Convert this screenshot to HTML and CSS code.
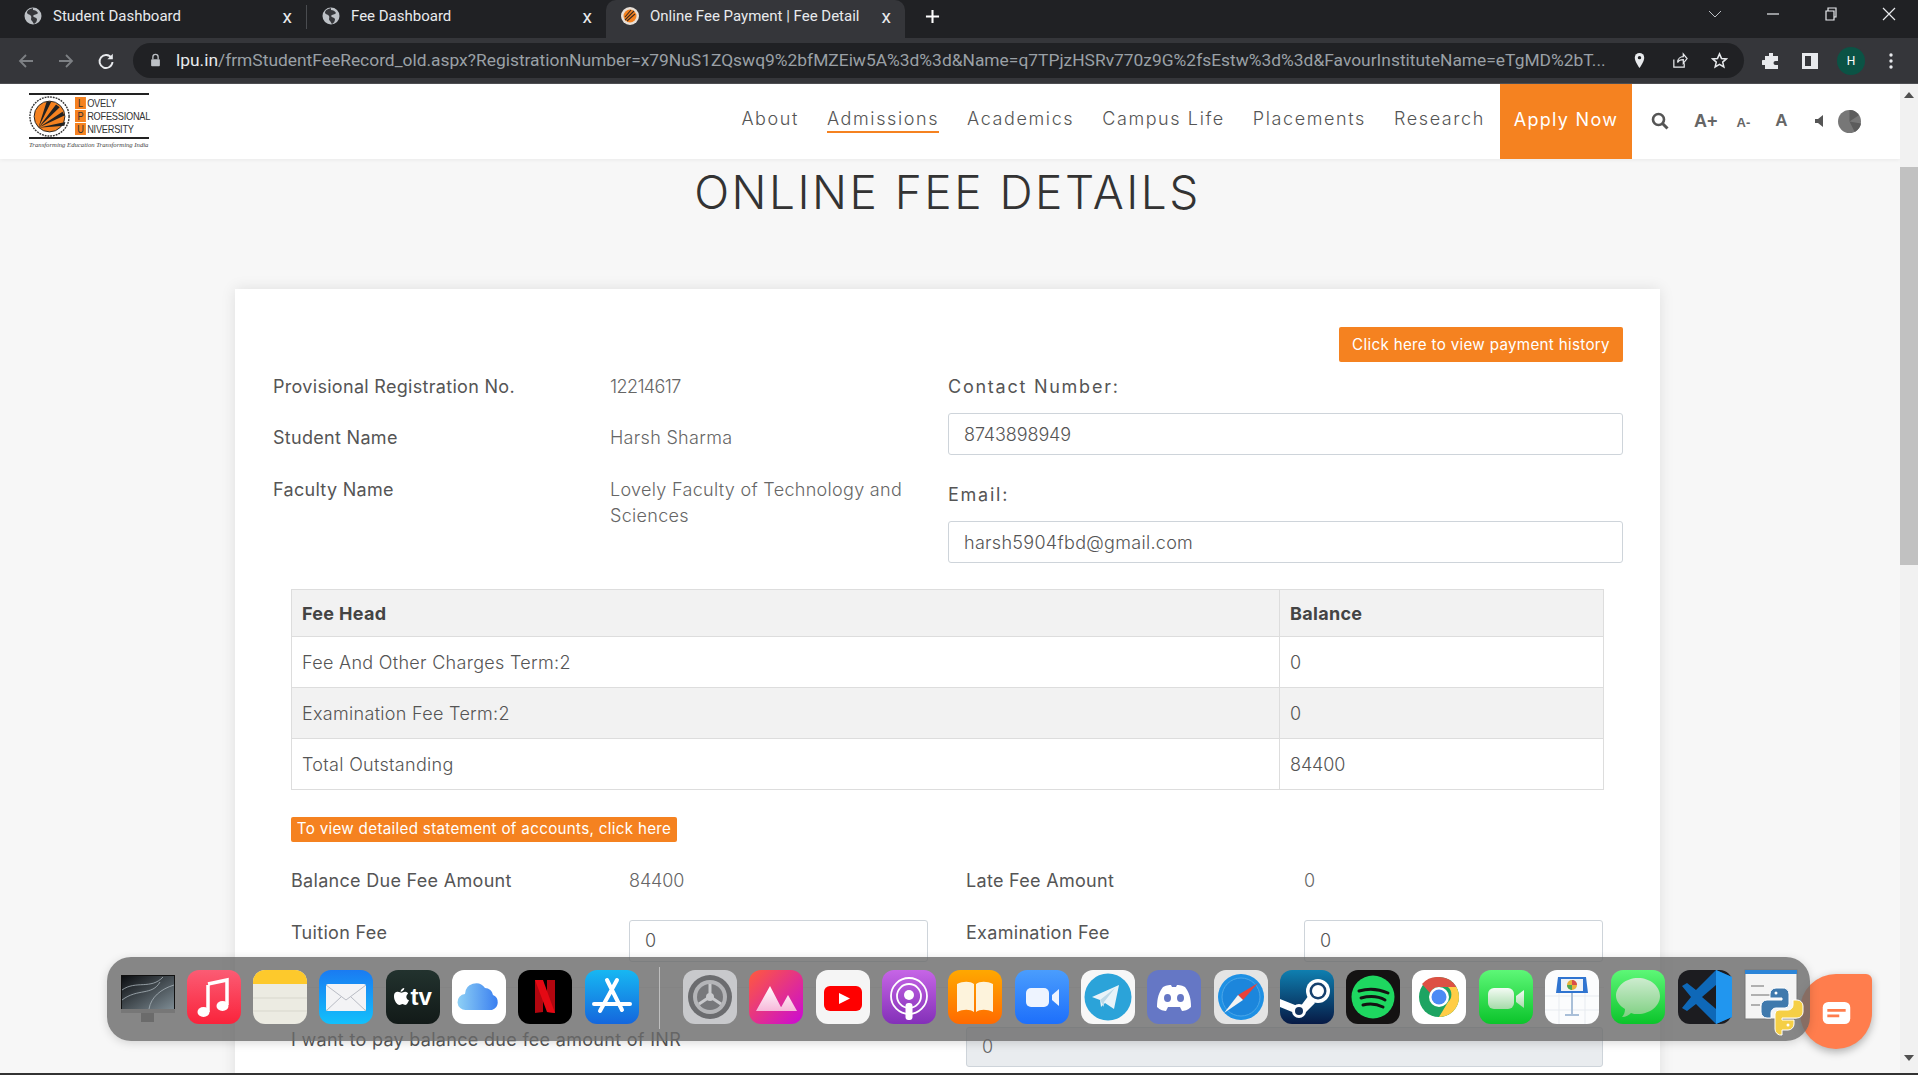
FILE: index.html
```html
<!doctype html>
<html>
<head>
  <meta charset="utf-8">
  <title>Online Fee Payment | Fee Detail</title>
  <link rel="stylesheet" href="styles.css">
</head>
<body>
  <div class="tabstrip">
    <div class="tab tab-first">
      <svg class="favicon" viewBox="0 0 18 18"><circle cx="9" cy="9" r="8.5" fill="#bdc1c6"/><path d="M9 1C6 2 3 3 3 6c1 2 3 1 4 3s-1 3 1 5c1 1 1 2 2 3 2-1 3-3 3-5-1-2-3-1-4-3 1-2 4-1 5-3-1-2-3-3-5-3z" fill="#35363a"/></svg>
      <span class="tab-title">Student Dashboard</span>
      <span class="tab-close">x</span>
    </div>
    <div class="tab tab-sep">
      <svg class="favicon" viewBox="0 0 18 18"><circle cx="9" cy="9" r="8.5" fill="#bdc1c6"/><path d="M9 1C6 2 3 3 3 6c1 2 3 1 4 3s-1 3 1 5c1 1 1 2 2 3 2-1 3-3 3-5-1-2-3-1-4-3 1-2 4-1 5-3-1-2-3-3-5-3z" fill="#35363a"/></svg>
      <span class="tab-title">Fee Dashboard</span>
      <span class="tab-close">x</span>
    </div>
    <div class="tab tab-active">
      <svg class="favicon" viewBox="0 0 18 18"><circle cx="9" cy="9" r="9" fill="#e8e0d8"/><circle cx="9" cy="9" r="6.5" fill="#f58220"/><path d="M4 13 13 4M6 14l8-7M4 10l6-7" stroke="#3a2a20" stroke-width="1.1"/></svg>
      <span class="tab-title">Online Fee Payment | Fee Detail</span>
      <span class="tab-close">x</span>
    </div>
    <svg class="tab-new" viewBox="0 0 16 16"><path d="M8 1v14M1 8h14" stroke="#fff" stroke-width="2.2"/></svg>
    <div class="window-btns">
      <svg viewBox="0 0 14 14"><path d="M1 4l6 6 6-6" fill="none" stroke="#bdc1c6"/></svg>
      <svg viewBox="0 0 14 14"><path d="M1 7h12" stroke="#e8eaed" stroke-width="1.2"/></svg>
      <svg viewBox="0 0 14 14"><path d="M2 4h8v9H2zM4 4V1h8v9h-2" fill="none" stroke="#e8eaed" stroke-width="1.2"/></svg>
      <svg viewBox="0 0 14 14"><path d="M1 1l12 12M13 1 1 13" stroke="#e8eaed" stroke-width="1.2"/></svg>
    </div>
  </div>

  <div class="toolbar">
    <svg class="nav-ico" viewBox="0 0 18 18"><path d="M16 9H3M9 3 3 9l6 6" fill="none" stroke="#7d8084" stroke-width="1.8"/></svg>
    <svg class="nav-ico" viewBox="0 0 18 18"><path d="M2 9h13M9 3l6 6-6 6" fill="none" stroke="#7d8084" stroke-width="1.8"/></svg>
    <svg class="nav-ico" viewBox="0 0 18 18"><path d="M14.5 6A6.5 6.5 0 1 0 15.5 10" fill="none" stroke="#e8eaed" stroke-width="1.9"/><path d="M15.8 1.8v5.4h-5.4z" fill="#e8eaed"/></svg>
    <div class="omnibox">
      <svg class="lock" viewBox="0 0 12 16"><path d="M3 7V4.5a3 3 0 0 1 6 0V7" fill="none" stroke="#bdc1c6" stroke-width="1.5"/><rect x="1" y="7" width="10" height="8" rx="1" fill="#bdc1c6"/></svg>
      <span class="url"><span class="url-host">lpu.in</span>/frmStudentFeeRecord_old.aspx?RegistrationNumber=x79NuS1ZQswq9%2bfMZEiw5A%3d%3d&amp;Name=q7TPjzHSRv770z9G%2fsEstw%3d%3d&amp;FavourInstituteName=eTgMD%2bT...</span>
      <svg class="omni-ico" viewBox="0 0 18 18"><path d="M9 1a5 5 0 0 0-5 5c0 4 5 11 5 11s5-7 5-11a5 5 0 0 0-5-5z" fill="#e8eaed"/><circle cx="9" cy="6" r="1.8" fill="#202124"/></svg>
      <svg class="omni-ico" viewBox="0 0 18 18"><path d="M3 8v8h11v-4M7 11c0-4 3-6 6-6V2l4 5-4 5V8c-3 0-5 1-6 3z" fill="none" stroke="#e8eaed" stroke-width="1.3"/></svg>
      <svg class="omni-ico" viewBox="0 0 18 18"><path d="M9 2l2.1 4.8 5.2.5-3.9 3.4 1.2 5.1L9 13.1l-4.6 2.7 1.2-5.1L1.7 7.3l5.2-.5z" fill="none" stroke="#e8eaed" stroke-width="1.6"/></svg>
    </div>
    <svg class="tool-ico" viewBox="0 0 18 18"><path d="M7 1h4v3h5v5h-2.5a2 2 0 1 0 0 4H16v4H3v-4H1.500a2.500 2.500 0 1 1 0-5H3V4h4z" fill="#e8eaed"/></svg>
    <svg class="tool-ico" viewBox="0 0 18 18"><path d="M1 1h16v16H1z" fill="#e8eaed"/><path d="M4 4h6v10H4z" fill="#35363a"/></svg>
    <span class="avatar">H</span>
    <svg class="tool-ico" viewBox="0 0 18 18"><circle cx="9" cy="3" r="1.7" fill="#e8eaed"/><circle cx="9" cy="9" r="1.7" fill="#e8eaed"/><circle cx="9" cy="15" r="1.7" fill="#e8eaed"/></svg>
  </div>

  <div class="viewport">
    <div class="page">
      <header class="site-head">
        <div class="logo">
          <div class="logo-main">
            <svg class="logo-seal" viewBox="0 0 44 44"><circle cx="22" cy="22" r="21" fill="#fff" stroke="#333" stroke-width="1.5" stroke-dasharray="2 1"/><circle cx="22" cy="22" r="16.5" fill="#f58220" stroke="#222"/><path d="M10 34 19 6l5 0zM10 34 29 9l4 3zM10 34 36 17l2 4zM10 34 39 28l-1 4z" fill="#222"/></svg>
            <div class="logo-words">
              <div class="logo-line"><b>L</b>OVELY</div>
              <div class="logo-line"><b>P</b>ROFESSIONAL</div>
              <div class="logo-line"><b>U</b>NIVERSITY</div>
            </div>
          </div>
          <div class="logo-tag">Transforming Education Transforming India</div>
        </div>
        <nav class="site-nav">
          <a>About</a>
          <a class="current">Admissions</a>
          <a>Academics</a>
          <a>Campus Life</a>
          <a>Placements</a>
          <a>Research</a>
        </nav>
        <a class="apply">Apply Now</a>
        <div class="a11y">
          <svg class="a11y-search" viewBox="0 0 18 18"><circle cx="7.5" cy="7.5" r="5.5" fill="none" stroke="#555" stroke-width="2.6"/><path d="M11.5 11.5l5 5" stroke="#555" stroke-width="3"/></svg>
          <span class="a11y-big">A+</span>
          <span class="a11y-small">A-</span>
          <span class="a11y-mid">A</span>
          <svg class="a11y-sound" viewBox="0 0 10 14"><path d="M0 5h3l5-4v12L3 9H0z" fill="#555"/></svg>
          <svg class="a11y-disc" viewBox="0 0 22 22"><circle cx="11" cy="11" r="11" fill="#777"/><path d="M11 11 11 0a11 11 0 0 1 9 5zM11 11l11 2a11 11 0 0 1-6 8z" fill="#5c5c5c"/></svg>
        </div>
      </header>

      <main class="fee-wrap">
        <h1 class="fee-title">ONLINE FEE DETAILS</h1>
        <section class="fee-card">
          <div class="history-row"><a class="btn-orange">Click here to view payment history</a></div>
          <div class="student">
            <div class="student-info">
              <div class="info-row"><span class="info-label">Provisional Registration No.</span><span class="info-value num-tight">12214617</span></div>
              <div class="info-row"><span class="info-label">Student Name</span><span class="info-value">Harsh Sharma</span></div>
              <div class="info-row"><span class="info-label">Faculty Name</span><span class="info-value">Lovely Faculty of Technology and Sciences</span></div>
            </div>
            <div class="student-contact">
              <label class="field-label">Contact Number:</label>
              <div class="field field-first num">8743898949</div>
              <label class="field-label">Email:</label>
              <div class="field">harsh5904fbd@gmail.com</div>
            </div>
          </div>

          <div class="fees">
            <table class="fee-table">
              <tr class="head-row"><th class="col-head">Fee Head</th><th>Balance</th></tr>
              <tr class="row-a"><td>Fee And Other Charges Term:2</td><td>0</td></tr>
              <tr class="row-b"><td>Examination Fee Term:2</td><td>0</td></tr>
              <tr class="row-c"><td>Total Outstanding</td><td class="num">84400</td></tr>
            </table>
            <a class="btn-statement">To view detailed statement of accounts, click here</a>
            <div class="amounts">
              <span class="amount-label">Balance Due Fee Amount</span><span class="amount-value num">84400</span>
              <span class="amount-label">Late Fee Amount</span><span class="amount-value">0</span>
            </div>
            <div class="amounts amounts-inputs">
              <span class="amount-label">Tuition Fee</span><div class="field">0</div>
              <span class="amount-label">Examination Fee</span><div class="field">0</div>
            </div>
            <hr class="fees-rule">
            <div class="pay-row">
              <span class="amount-label">I want to pay balance due fee amount of INR</span>
              <div class="field field-off">0</div>
            </div>
          </div>
        </section>
      </main>
    </div>

    <div class="scrollbar">
      <span class="arrow-up"></span>
      <div class="scroll-track"><div class="scroll-thumb"></div></div>
      <span class="arrow-down"></span>
    </div>
  </div>

  <div class="chat-bubble">
    <svg viewBox="0 0 30 24"><rect width="30" height="24" rx="6" fill="#fff"/><path d="M5 9h20M5 15h13" stroke="#ff7d4d" stroke-width="3"/></svg>
  </div>

  <div class="dock">
    <svg class="dock-icon" viewBox="0 0 54 54"><defs><linearGradient id="gm" x1="0" y1="0" x2="1" y2="1"><stop offset="0" stop-color="#0b0d10"/><stop offset="1" stop-color="#7d8b93"/></linearGradient></defs><rect x="0" y="5" width="54" height="38" fill="#111"/><rect x="1" y="6" width="52" height="33" fill="url(#gm)"/><path d="M1 20C15 10 30 20 42 7M1 30c16-12 30-4 38-18M28 39c2-12 12-20 25-24" fill="none" stroke="#aab4ba" stroke-width=".8"/><rect x="0" y="39" width="54" height="4" fill="#777"/><rect x="20" y="43" width="13" height="9" fill="#6b6b6b"/></svg>
    <svg class="dock-icon" viewBox="0 0 54 54"><defs><linearGradient id="g1" x1="0" y1="0" x2="0" y2="1"><stop offset="0" stop-color="#fb5c74"/><stop offset="1" stop-color="#fa233b"/></linearGradient></defs><rect width="54" height="54" rx="12" fill="url(#g1)"/><path d="M21 14l19-4v25" fill="none" stroke="#fff" stroke-width="3.5"/><path d="M21 15v27" stroke="#fff" stroke-width="3.5"/><ellipse cx="16.500" cy="42" rx="6" ry="5" fill="#fff"/><ellipse cx="35.500" cy="36" rx="6" ry="5" fill="#fff"/></svg>
    <svg class="dock-icon" viewBox="0 0 54 54"><rect width="54" height="54" rx="12" fill="#ecebe2"/><path d="M0 14V12A12 12 0 0 1 12 0h30a12 12 0 0 1 12 12v2z" fill="#fdc92c"/><path d="M0 28h54M0 41h54" stroke="#d8d7cd"/></svg>
    <svg class="dock-icon" viewBox="0 0 54 54"><defs><linearGradient id="g2" x1="0" y1="0" x2="0" y2="1"><stop offset="0" stop-color="#1a7bf2"/><stop offset="1" stop-color="#13c0fb"/></linearGradient></defs><rect width="54" height="54" rx="12" fill="url(#g2)"/><rect x="7" y="14" width="40" height="27" rx="2" fill="#f3f3f5"/><path d="M7 15l20 15 20-15M7 41l15-14M47 41 32 27" fill="none" stroke="#b9bcc4"/></svg>
    <div class="dock-tile tile-tv"><svg class="tv-apple" viewBox="0 0 16 18"><path d="M11 0c0 2-2 4-4 4 0-2 2-4 4-4zM8 5c1 0 2-1 4-1 1 0 3 1 3 2-3 2-2 6 1 7-1 2-2 5-4 5-1 0-2-1-3-1s-2 1-3 1c-3 0-6-5-6-9s2-5 4-5c2 0 3 1 4 1z" fill="#fff"/></svg>tv</div>
    <svg class="dock-icon" viewBox="0 0 54 54"><defs><linearGradient id="g3" x1="0" y1="0" x2="1" y2="0"><stop offset="0" stop-color="#8ed0f5"/><stop offset="1" stop-color="#3a7ff0"/></linearGradient></defs><rect width="54" height="54" rx="12" fill="#fff"/><path d="M14 40a8 8 0 0 1-1-16 11 11 0 0 1 20-6 8 8 0 0 1 8 7 8 8 0 0 1-1 15z" fill="url(#g3)"/></svg>
    <svg class="dock-icon" viewBox="0 0 54 54"><rect width="54" height="54" rx="12" fill="#000"/><path d="M17 10h8v32l-8 1z" fill="#b1060f"/><path d="M29 10h8v33l-8-1z" fill="#b1060f"/><path d="M17 10h8l12 33-8-1z" fill="#e50914"/></svg>
    <svg class="dock-icon" viewBox="0 0 54 54"><defs><linearGradient id="g4" x1="0" y1="0" x2="0" y2="1"><stop offset="0" stop-color="#17b7f2"/><stop offset="1" stop-color="#1466dd"/></linearGradient></defs><rect width="54" height="54" rx="12" fill="url(#g4)"/><path d="M22 10l15 30M32 10 15 41M9 34h36" stroke="#fff" stroke-width="4" stroke-linecap="round"/></svg>
    <div class="dock-divider"></div>
    <svg class="dock-icon" viewBox="0 0 54 54"><rect width="54" height="54" rx="12" fill="#c8c9cc"/><circle cx="27" cy="27" r="22" fill="#6b6c6f"/><circle cx="27" cy="27" r="17" fill="#b4b5b8"/><circle cx="27" cy="27" r="13" fill="#77787b"/><path d="M27 14v10M16 34l9-6M38 34l-9-6" stroke="#c8c9cc" stroke-width="3"/><circle cx="27" cy="27" r="4" fill="#c8c9cc"/></svg>
    <svg class="dock-icon" viewBox="0 0 54 54"><defs><linearGradient id="g5" x1="0" y1="0" x2="1" y2="1"><stop offset="0" stop-color="#ff5a3c"/><stop offset="1" stop-color="#c90ad6"/></linearGradient><linearGradient id="g6" x1="0" y1="0" x2="0" y2="1"><stop offset="0" stop-color="#fff"/><stop offset="1" stop-color="#f7b8da"/></linearGradient></defs><rect width="54" height="54" rx="12" fill="url(#g5)"/><path d="M7 41l14-25 13 25zM30 41l9-16 9 16z" fill="url(#g6)"/></svg>
    <svg class="dock-icon" viewBox="0 0 54 54"><rect width="54" height="54" rx="12" fill="#f5f5f5"/><rect x="8" y="16" width="38" height="25" rx="6" fill="#f00"/><path d="M23 23l11 5.5-11 5.500z" fill="#fff"/></svg>
    <svg class="dock-icon" viewBox="0 0 54 54"><defs><linearGradient id="g7" x1="0" y1="0" x2="0" y2="1"><stop offset="0" stop-color="#c665e6"/><stop offset="1" stop-color="#8330b8"/></linearGradient></defs><rect width="54" height="54" rx="12" fill="url(#g7)"/><circle cx="27" cy="26" r="18" fill="none" stroke="#fff" stroke-width="1.8"/><circle cx="27" cy="26" r="12" fill="none" stroke="#fff" stroke-width="1.8"/><circle cx="27" cy="25" r="5" fill="#fff"/><rect x="23.5" y="33" width="7" height="17" rx="3" fill="#fff"/></svg>
    <svg class="dock-icon" viewBox="0 0 54 54"><defs><linearGradient id="g8" x1="0" y1="0" x2="0" y2="1"><stop offset="0" stop-color="#ffa800"/><stop offset="1" stop-color="#ff6a00"/></linearGradient></defs><rect width="54" height="54" rx="12" fill="url(#g8)"/><path d="M9 14c6-3 13-3 17 0v28c-4-3-11-3-17 0zM45 14c-6-3-13-3-17 0v28c4-3 11-3 17 0z" fill="#fdf3dc"/></svg>
    <svg class="dock-icon" viewBox="0 0 54 54"><defs><linearGradient id="g9" x1="0" y1="0" x2="0" y2="1"><stop offset="0" stop-color="#4a9dfd"/><stop offset="1" stop-color="#1d6ffb"/></linearGradient></defs><rect width="54" height="54" rx="12" fill="url(#g9)"/><rect x="11" y="18" width="23" height="19" rx="5" fill="#eef4ff"/><path d="M37 25l7-6v17l-7-6z" fill="#eef4ff"/></svg>
    <svg class="dock-icon" viewBox="0 0 54 54"><rect width="54" height="54" rx="12" fill="#f7f7f7"/><circle cx="27" cy="27" r="23.5" fill="#2ba3d9"/><path d="M11 27l27-12-5 24-9-6-4 4-1-7z" fill="#e8f3f9"/><path d="M19 30l15-12-11 14 0 5z" fill="#bcd9e8"/></svg>
    <svg class="dock-icon" viewBox="0 0 54 54"><rect width="54" height="54" rx="12" fill="#6577c5"/><path d="M10 37c0-9 2-15 6-20 4-2 7-2 8-2l1 2h4l1-2c1 0 4 0 8 2 4 5 6 11 6 20-3 3-7 4-9 4l-2-4H21l-2 4c-2 0-6-1-9-4z" fill="#fff"/><ellipse cx="20.5" cy="28" rx="3.5" ry="4" fill="#6577c5"/><ellipse cx="33.5" cy="28" rx="3.5" ry="4" fill="#6577c5"/></svg>
    <svg class="dock-icon" viewBox="0 0 54 54"><rect width="54" height="54" rx="12" fill="#e4e4e4"/><circle cx="27" cy="27" r="23" fill="#1e90e4"/><circle cx="27" cy="27" r="19" fill="#1c86dc" stroke="#4ba6e8"/><path d="M44 13 24 25l5 5z" fill="#e8423a"/><path d="M10 43l14-18 5 5z" fill="#f2f2f2"/></svg>
    <svg class="dock-icon" viewBox="0 0 54 54"><defs><linearGradient id="g10" x1="0" y1="0" x2="0" y2="1"><stop offset="0" stop-color="#0f7fb0"/><stop offset="1" stop-color="#071a45"/></linearGradient><clipPath id="steamclip"><rect width="54" height="54" rx="12"/></clipPath></defs><rect width="54" height="54" rx="12" fill="url(#g10)"/><g clip-path="url(#steamclip)"><circle cx="38" cy="21" r="12" fill="#fff"/><circle cx="38" cy="21" r="8.5" fill="#16406d"/><circle cx="38" cy="21" r="6" fill="#fff"/><path d="M0 29l20 8 9-12 6 8-13 13L0 37z" fill="#fff"/><circle cx="19" cy="41" r="7" fill="#fff"/><circle cx="19" cy="41" r="4" fill="#14345f"/></g></svg>
    <svg class="dock-icon" viewBox="0 0 54 54"><rect width="54" height="54" rx="12" fill="#141212"/><circle cx="27" cy="27" r="21.5" fill="#1ed760"/><path d="M13 21c10-3 20-2 29 2M15 28c8-2 17-2 24 2M17 35c7-2 14-1 20 2" fill="none" stroke="#141212" stroke-width="3" stroke-linecap="round"/></svg>
    <svg class="dock-icon" viewBox="0 0 54 54"><rect width="54" height="54" rx="12" fill="#fff"/><circle cx="27" cy="27" r="20" fill="#1da462"/><path d="M27 7a20 20 0 0 1 17.300 10H27a10 10 0 0 0-9 6L10 14A20 20 0 0 1 27 7z" fill="#dd5144"/><path d="M44.300 17A20 20 0 0 1 27 47l9-15a10 10 0 0 0 0-15z" fill="#ffcd46"/><circle cx="27" cy="27" r="10" fill="#fff"/><circle cx="27" cy="27" r="7.5" fill="#4c8bf5"/></svg>
    <svg class="dock-icon" viewBox="0 0 54 54"><defs><linearGradient id="g11" x1="0" y1="0" x2="0" y2="1"><stop offset="0" stop-color="#5df777"/><stop offset="1" stop-color="#0bc42b"/></linearGradient><linearGradient id="g12" x1="0" y1="0" x2="0" y2="1"><stop offset="0" stop-color="#f4fbf4"/><stop offset="1" stop-color="#a5dba9"/></linearGradient></defs><rect width="54" height="54" rx="12" fill="url(#g11)"/><rect x="9" y="18" width="26" height="21" rx="6" fill="url(#g12)"/><path d="M37 26l8-6v18l-8-6z" fill="url(#g12)"/></svg>
    <svg class="dock-icon" viewBox="0 0 54 54"><rect width="54" height="54" rx="12" fill="#fbfcfd"/><path d="M0 26h54M0 40h54M14 20v34M40 20v34" stroke="#e7ebf0"/><path d="M13 7h28l2 16H11z" fill="#2f74d0"/><rect x="16" y="9" width="22" height="12" fill="#eef2f7"/><circle cx="27" cy="15" r="5" fill="#e8b13c"/><path d="M27 15V10a5 5 0 0 1 5 5z" fill="#d94b4b"/><path d="M27 15h-5a5 5 0 0 0 5 5z" fill="#4aa856"/><path d="M27 23v22M20 45h14" stroke="#a9bfd8" stroke-width="2"/></svg>
    <svg class="dock-icon" viewBox="0 0 54 54"><defs><linearGradient id="g13" x1="0" y1="0" x2="0" y2="1"><stop offset="0" stop-color="#cdeccf"/><stop offset="1" stop-color="#7fd082"/></linearGradient></defs><rect width="54" height="54" rx="12" fill="url(#g11)"/><path d="M27 8c12 0 22 8 22 18S39 44 27 44c-3 0-5 0-7-1-2 2-5 4-9 4 2-2 3-5 3-8-5-3-9-8-9-13C5 16 15 8 27 8z" fill="url(#g13)"/></svg>
    <svg class="dock-icon" viewBox="0 0 54 54"><rect width="54" height="54" rx="12" fill="#1c1c20"/><path d="M38 0l16 7v40l-16 7-20-20-9 7-5-3 9-11-9-11 5-3 9 7z" fill="#0e68b8"/><path d="M38 0l16 7v40l-16 7z" fill="#2196ef"/><path d="M38 15 24 27l14 12z" fill="#1c1c20"/></svg>
    <svg class="dock-icon dock-icon-py" viewBox="0 0 54 54"><rect x="1" width="52" height="49" fill="#f4f4f4" stroke="#777"/><rect x="1" width="52" height="4" fill="#2c85d8"/><path d="M7 16h13M7 25h22M7 35h9" stroke="#999" stroke-width="1.5"/><path d="M38 18h-6a6 6 0 0 0-6 6v4h12v2H23a6 6 0 0 0-6 6v6a6 6 0 0 0 6 6h4v-5a5 5 0 0 1 5-5h9a4 4 0 0 0 4-4V24a6 6 0 0 0-7-6z" fill="#3f79ad" stroke="#fff"/><path d="M38 60h6a6 6 0 0 0 6-6v-4H38v-2h15a6 6 0 0 0 6-6v-6a6 6 0 0 0-6-6h-4v5a5 5 0 0 1-5 5h-9a4 4 0 0 0-4 4v15a6 6 0 0 0 7 6z" fill="#f5cf46" stroke="#fff"/><circle cx="32" cy="23" r="1.5" fill="#fff"/><circle cx="44" cy="55" r="1.5" fill="#fff"/></svg>
  </div>
  <div class="screen-edge"></div>
</body>
</html>
```

FILE: styles.css
```css
* {
  box-sizing: border-box;
}
html, body {
  margin: 0;
  height: 1075px;
  overflow: hidden;
}
body {
  position: relative;
  display: flex;
  flex-direction: column;
  font-family: Inter, "Open Sans", sans-serif;
  color: #555;
  background: #f7f7f7;
}

/* browser chrome */
.tabstrip {
  height: 38px;
  flex: none;
  display: flex;
  align-items: center;
  background: #202124;
  color: #e8eaed;
  font-family: Roboto, sans-serif;
  font-size: 15px;
}
.tab {
  width: 300px;
  height: 38px;
  display: flex;
  align-items: center;
  padding: 0 14px 6px 16px;
  position: relative;
}
.tab-first {
  width: 306px;
  padding-left: 24px;
}
.tab-sep::before {
  content: "";
  position: absolute;
  left: 0;
  top: 5px;
  height: 24px;
  width: 1px;
  background: #4a4c50;
}
.tab-active {
  background: #35363a;
  border-radius: 10px 10px 0 0;
  padding-left: 15px;
  width: 299px;
}
.favicon {
  width: 18px;
  height: 18px;
  margin-right: 11px;
  flex: none;
}
.tab-title {
  flex: 1;
  white-space: nowrap;
}
.tab-close {
  font-size: 19px;
  line-height: 1;
}
.tab-new {
  width: 15px;
  height: 15px;
  margin: -6px 0 0 20px;
}
.window-btns {
  margin-left: auto;
  display: flex;
  gap: 44px;
  padding: 0 22px 10px 0;
}
.window-btns svg {
  width: 14px;
  height: 14px;
}

.toolbar {
  height: 46px;
  flex: none;
  display: flex;
  align-items: center;
  background: #35363a;
  border-bottom: 1px solid #4d4e52;
  padding-left: 17px;
  gap: 22px;
}
.nav-ico {
  width: 18px;
  height: 18px;
  flex: none;
}
.omnibox {
  width: 1611px;
  height: 35px;
  margin: -1px 0 0 -4px;
  display: flex;
  align-items: center;
  background: #202124;
  border-radius: 18px;
  padding: 0 16px 0 17px;
  color: #9aa0a6;
  font-family: Roboto, sans-serif;
  font-size: 17.4px;
}
.lock {
  width: 11px;
  height: 14px;
  margin-right: 15px;
  flex: none;
}
.url {
  flex: 1;
  min-width: 0;
  white-space: nowrap;
}
.url-host {
  color: #e8eaed;
}
.omni-ico {
  width: 17px;
  height: 17px;
  margin-left: 23px;
  flex: none;
}
.tool-ico {
  width: 18px;
  height: 18px;
  flex: none;
  margin-left: -1px;
}
.omnibox + .tool-ico {
  margin-left: -4px;
}
.avatar {
  width: 28px;
  height: 28px;
  margin: 0 -4px 0 -4px;
  flex: none;
  border-radius: 50%;
  background: #0b5345;
  color: #fff;
  font: 12px/28px Roboto, sans-serif;
  text-align: center;
}

/* page */
.viewport {
  flex: 1;
  display: flex;
  min-height: 0;
}
.page {
  flex: 1;
  overflow: hidden;
  background: #f7f7f7;
}
.site-head {
  height: 75px;
  display: flex;
  align-items: stretch;
  background: #fff;
  box-shadow: 0 1px 4px rgba(0, 0, 0, .06);
  padding-left: 29px;
}
.logo {
  width: 120px;
  margin-top: 9px;
}
.logo-main {
  display: flex;
  align-items: center;
  gap: 5px;
  height: 46px;
  border-top: 2px solid #222;
  border-bottom: 2px solid #222;
}
.logo-seal {
  width: 41px;
  height: 41px;
  flex: none;
}
.logo-words {
  transform: scaleX(.84);
  transform-origin: left center;
}
.logo-line {
  font-family: "Liberation Sans", sans-serif;
  font-size: 11px;
  line-height: 12px;
  margin-bottom: 1px;
  color: #333;
  white-space: nowrap;
  letter-spacing: -.3px;
}
.logo-line b {
  display: inline-block;
  width: 13px;
  margin-right: 1.5px;
  background: #f58220;
  text-align: center;
  font-weight: 400;
}
.logo-tag {
  font-family: "Liberation Serif", serif;
  font-style: italic;
  font-size: 6.7px;
  color: #444;
  white-space: nowrap;
  margin-top: 2px;
}
.site-nav {
  margin-left: auto;
  display: flex;
  gap: 28px;
  align-items: center;
  font-size: 18px;
  font-weight: 300;
  letter-spacing: 1.6px;
  color: #555;
  padding: 0 15px 5px 0;
}
.site-nav a {
  padding: 3px 0 2px;
  border-bottom: 2px solid transparent;
}
.site-nav .current {
  border-bottom-color: #f58220;
}
.apply {
  width: 132px;
  display: flex;
  align-items: center;
  justify-content: center;
  padding-bottom: 5px;
  background: #f58220;
  color: #fff;
  font-size: 18px;
  letter-spacing: 1.3px;
  white-space: nowrap;
}
.a11y {
  width: 268px;
  display: flex;
  align-items: center;
  padding: 0 0 1px 19px;
  color: #666;
  font-family: "Liberation Sans", sans-serif;
  font-weight: 700;
}
.a11y-search {
  width: 18px;
  height: 18px;
}
.a11y-big {
  font-size: 18px;
  margin-left: 25px;
}
.a11y-small {
  font-size: 13px;
  margin: 3px 0 0 19px;
}
.a11y-mid {
  font-size: 17px;
  margin-left: 25px;
}
.a11y-sound {
  width: 10px;
  height: 14px;
  margin-left: 27px;
}
.a11y-disc {
  width: 23px;
  height: 23px;
  margin-left: 13px;
}

.fee-wrap {
  width: 1425px;
  margin-left: 235px;
}
.fee-title {
  margin: 0;
  height: 130px;
  padding-top: 2px;
  text-align: center;
  font-weight: 300;
  font-size: 46px;
  line-height: 62px;
  color: #333;
  letter-spacing: 2.5px;
}
.fee-card {
  background: #fff;
  box-shadow: 0 0 14px rgba(0, 0, 0, .1);
  padding: 38px 37px 0 38px;
  height: 800px;
  font-size: 18px;
  letter-spacing: .3px;
}
.history-row {
  display: flex;
  justify-content: flex-end;
  margin-bottom: 12px;
}
.btn-orange {
  height: 35px;
  width: 284px;
  display: flex;
  align-items: center;
  justify-content: center;
  background: #f58220;
  border-radius: 2px;
  color: #fff;
  font-size: 15.2px;
  white-space: nowrap;
}
.student {
  display: flex;
  justify-content: space-between;
}
.student-info {
  width: 645px;
}
.info-row {
  display: flex;
  line-height: 26px;
  margin-bottom: 25px;
}
.info-row:nth-child(2) {
  margin-bottom: 26px;
}
.info-label {
  width: 337px;
  flex: none;
}
.info-value {
  flex: 1;
  color: #666;
  font-weight: 300;
}
.num {
  letter-spacing: -.1px;
}
.num-tight {
  letter-spacing: -.6px;
}
.student-contact {
  width: 675px;
}
.field-label {
  display: block;
  line-height: 26px;
  margin-bottom: 13px;
  letter-spacing: 1.75px;
}
.field {
  height: 42px;
  border: 1px solid #ced4da;
  border-radius: 3px;
  padding: 0 15px;
  display: flex;
  align-items: center;
  background: #fff;
  font-weight: 300;
}
.field-first {
  margin-bottom: 27px;
}
.fees {
  margin: 26px 19px 0 18px;
}
.fee-table {
  width: 1313px;
  border-collapse: collapse;
  table-layout: fixed;
}
.fee-table th, .fee-table td {
  border: 1px solid #ddd;
  padding: 0 10px;
  text-align: left;
}
.fee-table td {
  font-weight: 300;
}
.fee-table th {
  color: #444;
  font-weight: 700;
}
.col-head {
  width: 988px;
}
.head-row {
  height: 47px;
  background: #f2f2f2;
}
.row-a {
  height: 51px;
}
.row-b {
  height: 51px;
  background: #f2f2f2;
}
.row-c {
  height: 51px;
}
.btn-statement {
  display: block;
  width: 386px;
  height: 25px;
  margin: 27px 0 26px;
  background: #f58220;
  border-radius: 2px;
  color: #fff;
  font-size: 15.2px;
  line-height: 24px;
  text-align: center;
  white-space: nowrap;
}
.amounts {
  display: grid;
  grid-template-columns: 338px 299px 376px 299px;
  align-items: center;
  line-height: 26px;
}
.amounts .amount-label:nth-child(3) {
  margin-left: 38px;
}
.amount-value {
  color: #666;
  font-weight: 300;
}
.amounts-inputs {
  margin-top: 26px;
  align-items: start;
}
.fees-rule {
  border: 0;
  border-top: 1px solid #eee;
  margin: 25px 0 39px;
}
.pay-row {
  display: grid;
  grid-template-columns: 675px 637px;
  align-items: start;
  line-height: 26px;
}
.field-off {
  background: #e9ecef;
  height: 40px;
  color: #666;
}

.scrollbar {
  width: 18px;
  flex: none;
  background: #f1f1f1;
  display: flex;
  flex-direction: column;
  align-items: center;
  padding: 8px 0;
}
.arrow-up, .arrow-down {
  width: 0;
  height: 0;
  border-left: 5px solid transparent;
  border-right: 5px solid transparent;
}
.arrow-up {
  border-bottom: 6px solid #505050;
}
.arrow-down {
  border-top: 6px solid #505050;
  margin-bottom: 6px;
}
.scroll-track {
  flex: 1;
  width: 100%;
  padding-top: 69px;
}
.scroll-thumb {
  height: 398px;
  background: #c1c1c1;
}

/* things lying over the page */
.chat-bubble {
  position: absolute;
  left: 1800px;
  top: 974px;
  width: 72px;
  height: 75px;
  background: #ff7d4d;
  border-radius: 36px 6px 36px 36px;
  box-shadow: 0 3px 8px rgba(0, 0, 0, .3);
  display: flex;
  align-items: center;
  justify-content: center;
}
.chat-bubble svg {
  width: 29px;
  height: 22px;
  margin-top: 2px;
}
.dock {
  position: absolute;
  left: 107px;
  top: 957px;
  width: 1703px;
  height: 84px;
  background: rgba(105, 105, 105, .8);
  border-radius: 24px;
  box-shadow: 0 2px 10px rgba(0, 0, 0, .15);
  display: flex;
  gap: 12.3px;
  padding: 13px 0 0 13.5px;
}
.dock-icon {
  width: 54px;
  height: 54px;
  flex: none;
}
.dock-icon-py {
  overflow: visible;
}
.dock-tile {
  width: 54px;
  height: 54px;
  flex: none;
}
.tile-tv {
  background: linear-gradient(#22322e, #121a18);
  border-radius: 12px;
  color: #fff;
  font: 700 24px/54px "Liberation Sans", sans-serif;
  display: flex;
  align-items: center;
  justify-content: center;
  gap: 2px;
}
.tv-apple {
  width: 15px;
  height: 17px;
  margin-top: -2px;
}
.dock-divider {
  width: 1px;
  height: 62px;
  margin: -3px 11px 0 8px;
  background: #bdbdbd;
  flex: none;
}
.screen-edge {
  position: absolute;
  left: 0;
  right: 0;
  bottom: 0;
  height: 2px;
  background: #333;
}
```
